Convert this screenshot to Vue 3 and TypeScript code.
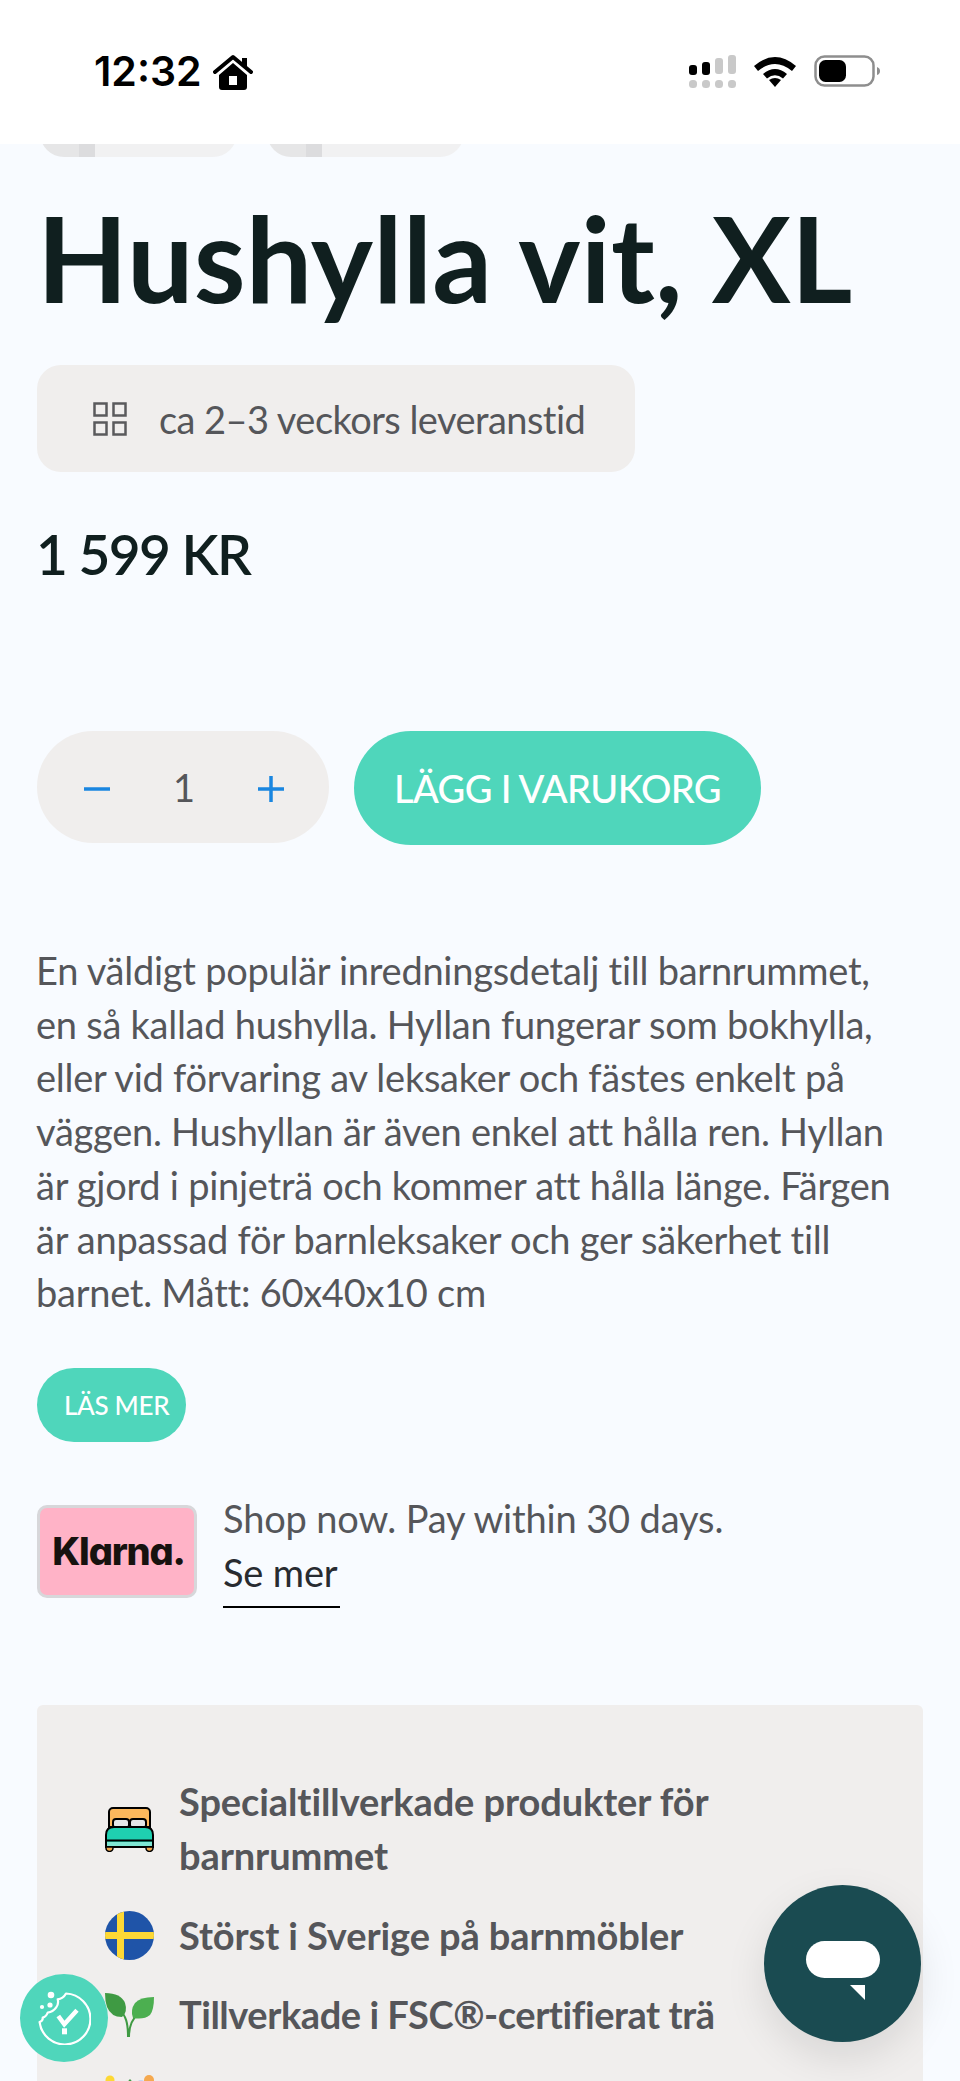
<script setup lang="ts">
import { ref } from 'vue';

const quantity = ref<number>(1);

const description =
  'En väldigt populär inredningsdetalj till barnrummet, en så kallad hushylla. Hyllan fungerar som bokhylla, eller vid förvaring av leksaker och fästes enkelt på väggen. Hushyllan är även enkel att hålla ren. Hyllan är gjord i pinjeträ och kommer att hålla länge. Färgen är anpassad för barnleksaker och ger säkerhet till barnet. Mått: 60x40x10 cm';
</script>

<template>
  <div class="screen">
    <header class="status">
      <div class="status-left">
        <span class="time">12:32</span>
        <svg class="home" viewBox="0 0 40 36" width="40" height="36">
          <path d="M2 18 20 3l18 15" fill="none" stroke="#000" stroke-width="4" stroke-linecap="round" stroke-linejoin="round" />
          <path d="M29 4h5v9l-5-4z" fill="#000" />
          <path fill-rule="evenodd" d="M20 9 6 21v12a3 3 0 0 0 3 3h22a3 3 0 0 0 3-3V21zM16 22h8v9h-8z" fill="#000" />
        </svg>
      </div>
      <div class="status-right">
        <svg viewBox="0 0 48 34" width="48" height="34">
          <rect x="1" y="10" width="8" height="10" rx="3" fill="#000" />
          <rect x="14" y="7" width="8" height="13" rx="3" fill="#000" />
          <rect x="27" y="3" width="8" height="16" rx="3" fill="#c9c9c9" />
          <rect x="40" y="0" width="8" height="19" rx="3" fill="#c9c9c9" />
          <rect x="1" y="25" width="8" height="8" rx="3.5" fill="#c9c9c9" />
          <rect x="14" y="25" width="8" height="8" rx="3.5" fill="#c9c9c9" />
          <rect x="27" y="25" width="8" height="8" rx="3.5" fill="#c9c9c9" />
          <rect x="40" y="25" width="8" height="8" rx="3.5" fill="#c9c9c9" />
        </svg>
        <svg class="wifi" viewBox="0 0 42 32" width="42" height="32">
          <path d="M0 11Q21-7 42 11l-4 5Q21 2 4 16z" fill="#000" />
          <path d="M9 19Q21 9 33 19l-4 4.500Q21 17 13 23.500z" fill="#000" />
          <path d="M15 25q6-4 12 0l-6 7z" fill="#000" />
        </svg>
        <svg class="battery" viewBox="0 0 66 32" width="66" height="32">
          <rect x="1.500" y="1.500" width="58" height="29" rx="9" fill="none" stroke="#8e8e8e" stroke-width="2.500" />
          <rect x="5" y="5" width="27" height="22" rx="6.500" fill="#000" />
          <path d="M63 12q3 1 3 4t-3 4z" fill="#8e8e8e" />
        </svg>
      </div>
    </header>

    <main class="page">
      <div class="thumbs">
        <div class="thumb"></div>
        <div class="thumb"></div>
      </div>

      <h1 class="title">Hushylla vit, XL</h1>

      <div class="delivery">
        <svg viewBox="0 0 34 34" width="34" height="34">
          <g fill="none" stroke="#5a5a5c" stroke-width="2.500">
            <rect x="1.500" y="1.500" width="12" height="12" />
            <rect x="20.500" y="1.500" width="12" height="12" />
            <rect x="1.500" y="20.500" width="12" height="12" />
            <rect x="20.500" y="20.500" width="12" height="12" />
          </g>
        </svg>
        <span>ca 2–3 veckors leveranstid</span>
      </div>

      <p class="price">1 599 KR</p>

      <div class="buy">
        <div class="qty">
          <button class="qty-btn" type="button" @click="quantity = Math.max(1, quantity - 1)">
            <svg viewBox="0 0 26 26" width="26" height="26"><path d="M0 13h26" stroke="#1a86e0" stroke-width="3.500" /></svg>
          </button>
          <span class="qty-value">{{ quantity }}</span>
          <button class="qty-btn" type="button" @click="quantity++">
            <svg viewBox="0 0 26 26" width="26" height="26"><path d="M0 13h26M13 0v26" stroke="#1a86e0" stroke-width="3.500" /></svg>
          </button>
        </div>
        <button class="add" type="button">LÄGG I VARUKORG</button>
      </div>

      <p class="description">{{ description }}</p>

      <button class="more" type="button">LÄS MER</button>

      <div class="klarna">
        <div class="klarna-badge">Klarna.</div>
        <div class="klarna-text">
          <span>Shop now. Pay within 30 days.</span>
          <a class="klarna-link">Se mer</a>
        </div>
      </div>

      <section class="usp">
        <div class="usp-row usp-row-first">
          <svg class="usp-icon" viewBox="0 0 49 45" width="49" height="45">
            <path d="M4 20V5a4 4 0 0 1 4-4h33a4 4 0 0 1 4 4v15z" fill="#fdb85c" stroke="#000" stroke-width="2" />
            <rect x="8" y="12" width="16" height="9" rx="3" fill="#e4e7e8" stroke="#000" stroke-width="2" />
            <rect x="25" y="12" width="16" height="9" rx="3" fill="#e4e7e8" stroke="#000" stroke-width="2" />
            <path d="M1 40V28q0-8 8-8h31q8 0 8 8v12z" fill="#1fd0b0" stroke="#000" stroke-width="2" />
            <path d="M1 33.500h47" stroke="#000" stroke-width="2" />
            <rect x="2" y="35" width="45" height="4" fill="#7fe6d3" />
            <path d="M1 40h7v1a3.500 3.500 0 0 1-7 0zM41 40h7v1a3.500 3.500 0 0 1-7 0z" fill="#f5a94f" stroke="#000" stroke-width="1.500" />
          </svg>
          <span>Specialtillverkade produkter för barnrummet</span>
        </div>
        <div class="usp-row">
          <svg class="usp-icon" viewBox="0 0 49 49" width="49" height="49">
            <clipPath id="flag-clip"><circle cx="24.500" cy="24.500" r="24.500" /></clipPath>
            <g clip-path="url(#flag-clip)">
              <rect width="49" height="49" fill="#1f54a8" />
              <rect x="12" width="7" height="49" fill="#fdd835" />
              <rect y="21" width="49" height="7" fill="#fdd835" />
            </g>
          </svg>
          <span>Störst i Sverige på barnmöbler</span>
        </div>
        <div class="usp-row">
          <svg class="usp-icon" viewBox="0 0 49 45" width="49" height="45">
            <path d="M23 44C23 30 21 22 14 17M24 44C24 32 27 26 33 21" fill="none" stroke="#3f9a43" stroke-width="2" />
            <path d="M0 0q16 0 20 10 3 9-3 14Q6 24 2 14 0 8 0 0z" fill="#3f9a43" />
            <path d="M49 4q-14 0-19 6-5 7-2 15 11 2 17-3 4-5 4-18z" fill="#4caf50" />
          </svg>
          <span class="usp-fsc">Tillverkade i FSC®-certifierat trä</span>
        </div>
        <div class="usp-row usp-row-last">
          <svg class="usp-icon" viewBox="0 0 49 45" width="49" height="45">
            <circle cx="5" cy="5" r="4.500" fill="#fdd835" />
            <circle cx="44" cy="5" r="5" fill="#f5a94f" />
            <path d="M18 12l7-8 7 8z" fill="#3f9a43" />
            <circle cx="36" cy="9" r="4" fill="#c7d3ee" />
          </svg>
        </div>
      </section>
    </main>

    <button class="cookie" type="button" aria-label="Cookies">
      <svg viewBox="0 0 54 54" width="54" height="54">
        <path d="M29 2.500A25.500 25.500 0 1 1 2.600 31Q6 30 5.700 26.700 9 26 10.700 21.700 16 21 19 16.700 22 13 20.700 8.300 26 8 29 2.500z" fill="none" stroke="#fff" stroke-width="2.200" stroke-linejoin="round" />
        <circle cx="14" cy="4" r="3.300" fill="#fff" />
        <circle cx="13" cy="14" r="2.600" fill="#fff" />
        <circle cx="5" cy="16" r="2.100" fill="#fff" />
        <path d="M21.300 25l6 8.300L40 19.300" fill="none" stroke="#fff" stroke-width="4.500" />
        <rect x="25" y="37.300" width="5" height="6" fill="#fff" />
      </svg>
    </button>

    <button class="chat" type="button" aria-label="Chat">
      <span class="chat-bubble"></span>
      <span class="chat-tail"></span>
    </button>
  </div>
</template>

<style>
html,
body {
  margin: 0;
  background: #f8fbff;
}
</style>

<style scoped>
.screen {
  position: relative;
  width: 960px;
  height: 2081px;
  overflow: hidden;
  background: #f8fbff;
  font-family: Lato, 'Open Sans', sans-serif;
  color: #55565a;
}
.status {
  height: 144px;
  background: #fff;
  box-sizing: border-box;
  padding: 53px 80px 0 94px;
  display: flex;
  justify-content: space-between;
  align-items: flex-start;
}
.status-left {
  display: flex;
  align-items: center;
  gap: 11px;
}
.time {
  font-family: Inter, sans-serif;
  font-weight: 600;
  font-size: 41px;
  line-height: 37px;
  color: #000;
}
.home {
  display: block;
}
.status-right {
  display: flex;
  align-items: flex-start;
  padding-top: 2px;
  gap: 18px;
}
.status-right svg {
  display: block;
}
.page {
  padding: 0 37px;
}
.thumbs {
  height: 13px;
  overflow: hidden;
  display: flex;
  align-items: flex-end;
  gap: 30px;
  padding-left: 3px;
}
.thumb {
  flex: none;
  width: 197px;
  height: 60px;
  border-radius: 24px;
  background: linear-gradient(90deg, #e6e6e7 0 20%, #dcdcde 20% 28%, #f1f1f2 28%);
}
.title {
  margin: 36px 0 0;
  font-size: 118px;
  line-height: 130px;
  font-weight: 700;
  letter-spacing: 0.18px;
  color: #101f1f;
  white-space: nowrap;
}
.delivery {
  margin-top: 42px;
  width: 598px;
  height: 107px;
  box-sizing: border-box;
  padding-left: 56px;
  border-radius: 24px;
  background: #f0eeed;
  display: flex;
  align-items: center;
  gap: 32px;
  font-size: 38px;
  letter-spacing: -0.55px;
  white-space: nowrap;
}
.price {
  margin: 47px 0 0 -1px;
  font-size: 55px;
  line-height: 70px;
  font-weight: 600;
  letter-spacing: -1.600px;
  color: #101f1f;
}
.buy {
  margin-top: 142px;
  display: flex;
  gap: 25px;
}
.qty {
  width: 292px;
  height: 112px;
  box-sizing: border-box;
  padding: 0 45px 0 47px;
  border-radius: 56px;
  background: #f0eeed;
  display: flex;
  align-items: center;
  justify-content: space-between;
}
.qty-btn {
  border: 0;
  background: none;
  padding: 6px 0 0;
  display: block;
}
.qty-value {
  font-size: 38px;
}
.add {
  width: 407px;
  height: 114px;
  border: 0;
  border-radius: 57px;
  background: #4fd6bb;
  color: #fff;
  font-family: inherit;
  font-size: 38px;
  letter-spacing: -0.6px;
  font-weight: 500;
  white-space: nowrap;
  padding: 0;
}
.description {
  margin: 99px 0 0 -1px;
  max-width: 870px;
  font-size: 38px;
  letter-spacing: -0.26px;
  line-height: 53.700px;
}
.more {
  margin-top: 48px;
  display: block;
  width: 149px;
  height: 74px;
  border: 0;
  border-radius: 37px;
  background: #4fd6bb;
  color: #fff;
  font-family: inherit;
  font-size: 26px;
  font-weight: 500;
  letter-spacing: -0.3px;
  text-align: left;
  padding: 0 0 0 27px;
}
.klarna {
  margin-top: 52px;
  display: flex;
  gap: 26px;
}
.klarna-badge {
  width: 160px;
  height: 93px;
  margin-top: 11px;
  box-sizing: border-box;
  padding-left: 3px;
  border: 3px solid #d7d7da;
  border-radius: 10px;
  background: #ffb3c7;
  color: #17120f;
  font-family: Inter, sans-serif;
  font-feature-settings: 'cv11';
  font-weight: 800;
  font-size: 38px;
  letter-spacing: -1.2px;
  display: flex;
  align-items: center;
  justify-content: center;
}
.klarna-text {
  margin-top: -2px;
  display: flex;
  flex-direction: column;
  align-items: flex-start;
  font-size: 38px;
  letter-spacing: -0.15px;
  line-height: 53.700px;
}
.klarna-link {
  color: #282b30;
  padding: 0 2px 7px 0;
  border-bottom: 2px solid #000;
}
.usp {
  margin-top: 97px;
  height: 500px;
  box-sizing: border-box;
  padding: 70px 68px;
  border-radius: 6px;
  background: #f0eeed;
  font-size: 38px;
  letter-spacing: -0.1px;
  line-height: 53.700px;
  font-weight: 700;
}
.usp-row {
  display: flex;
  align-items: center;
  gap: 25px;
  margin-top: 26px;
}
.usp-row-first {
  margin-top: 0;
}
.usp-row-last {
  margin-top: 33px;
}
.usp-fsc {
  letter-spacing: -0.45px;
}
.usp-icon {
  flex: none;
}
.cookie {
  position: absolute;
  left: 20px;
  top: 1974px;
  width: 88px;
  height: 88px;
  border: 0;
  padding: 0;
  border-radius: 50%;
  background: #4fd6bb;
  display: flex;
  align-items: center;
  justify-content: center;
}
.chat {
  position: absolute;
  left: 764px;
  top: 1885px;
  width: 157px;
  height: 157px;
  border: 0;
  padding: 0;
  border-radius: 50%;
  background: #1a4b51;
  box-shadow: 0 16px 40px rgba(0, 0, 0, 0.1);
}
.chat-bubble {
  position: absolute;
  left: 42px;
  top: 56px;
  width: 74px;
  height: 37px;
  border-radius: 19px;
  background: #fff;
}
.chat-tail {
  position: absolute;
  left: 86px;
  top: 100px;
  width: 15px;
  height: 15px;
  background: #fff;
  clip-path: polygon(0 0, 100% 0, 100% 100%);
}
</style>
